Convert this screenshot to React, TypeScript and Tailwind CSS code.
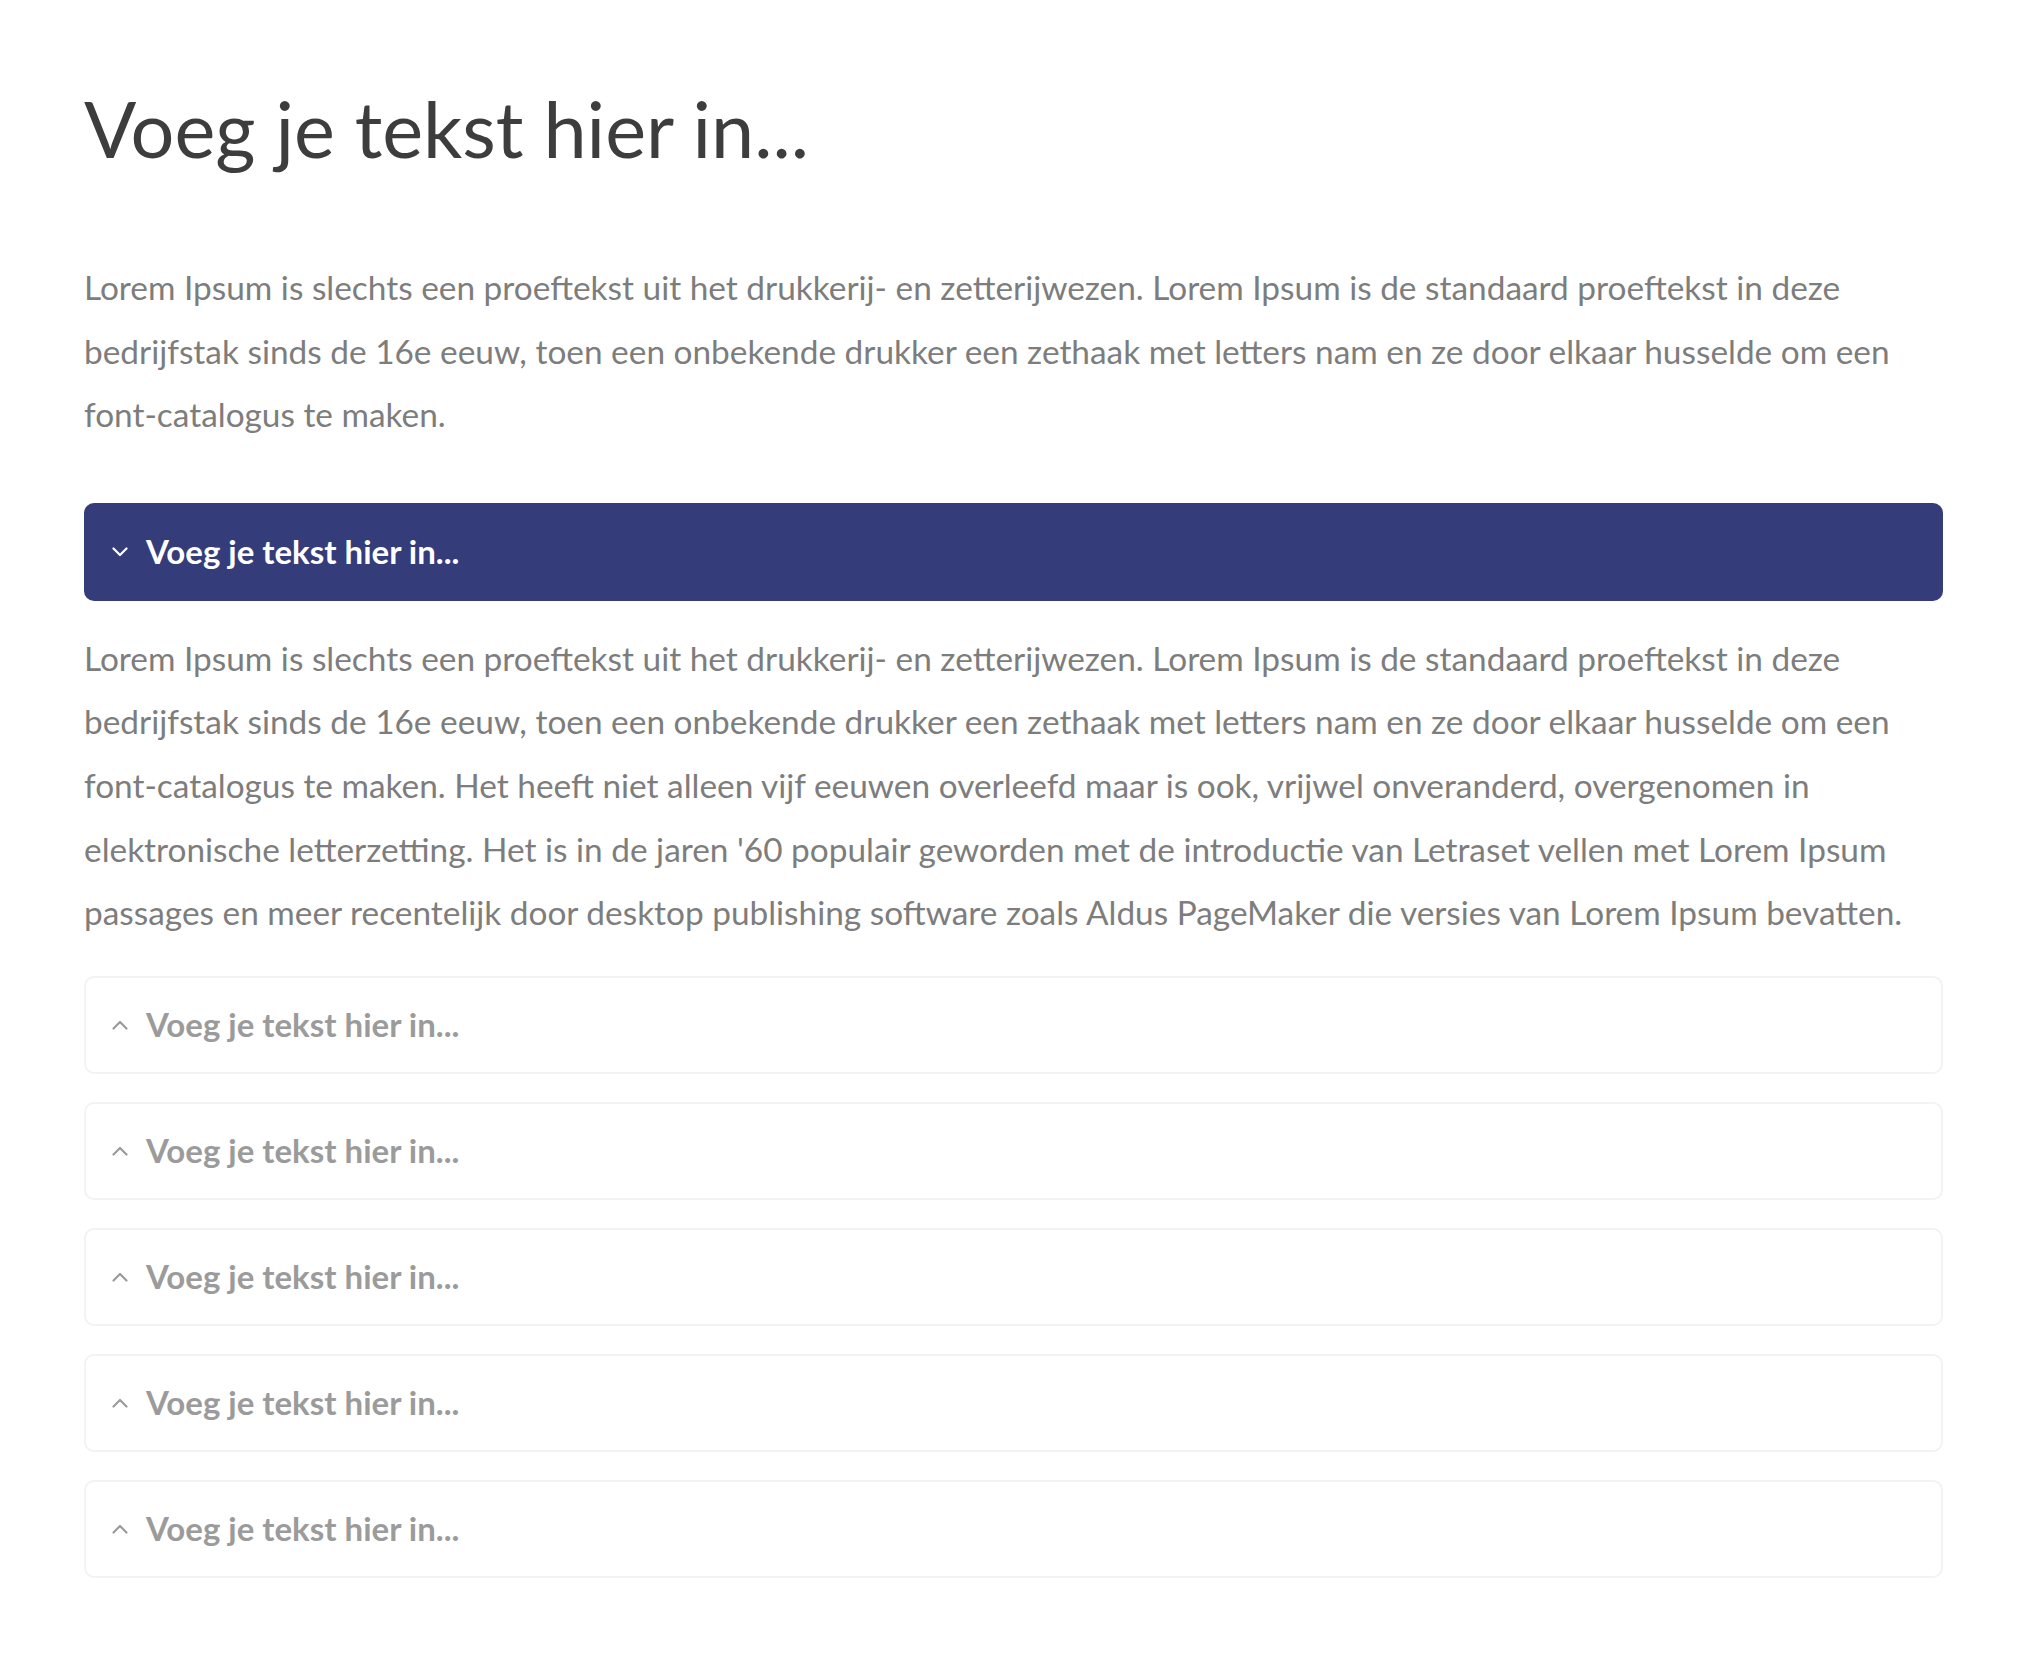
import React from "react";

const para1 =
  "Lorem Ipsum is slechts een proeftekst uit het drukkerij- en zetterijwezen. Lorem Ipsum is de standaard proeftekst in deze bedrijfstak sinds de 16e eeuw, toen een onbekende drukker een zethaak met letters nam en ze door elkaar husselde om een font-catalogus te maken.";

const para2 =
  "Lorem Ipsum is slechts een proeftekst uit het drukkerij- en zetterijwezen. Lorem Ipsum is de standaard proeftekst in deze bedrijfstak sinds de 16e eeuw, toen een onbekende drukker een zethaak met letters nam en ze door elkaar husselde om een font-catalogus te maken. Het heeft niet alleen vijf eeuwen overleefd maar is ook, vrijwel onveranderd, overgenomen in elektronische letterzetting. Het is in de jaren '60 populair geworden met de introductie van Letraset vellen met Lorem Ipsum passages en meer recentelijk door desktop publishing software zoals Aldus PageMaker die versies van Lorem Ipsum bevatten.";

function Chevron({ up, color }: { up?: boolean; color: string }) {
  return (
    <svg width="16" height="10" viewBox="0 0 16 10" className="shrink-0">
      <polyline
        points={up ? "1.5,8.5 8,2 14.5,8.5" : "1.5,1.5 8,8 14.5,1.5"}
        fill="none"
        stroke={color}
        strokeWidth="2.2"
        strokeLinecap="round"
        strokeLinejoin="round"
      />
    </svg>
  );
}

export default function App() {
  return (
    <div className="min-h-screen bg-white pl-[84px] pr-[91px] pt-[80px] pb-[102px] font-['Lato',sans-serif]">
      <h1 className="text-[77.4px] leading-[96px] text-[#3d3d3d] font-normal">
        Voeg je tekst hier in...
      </h1>
      <p className="mt-[80px] text-[33.4px] leading-[63.6px] text-[#7d7d7d]">
        {para1}
      </p>

      <div className="mt-[56px] flex flex-col">
        <div className="h-[98px] rounded-[10px] bg-[#343d7a] flex items-center pl-[28px] gap-[18px]">
          <Chevron color="#ffffff" />
          <span className="text-[33px] font-bold text-white">
            Voeg je tekst hier in...
          </span>
        </div>
        <p className="mt-[26px] text-[33.4px] leading-[63.6px] text-[#7d7d7d]">
          {para2}
        </p>

        <div className="mt-[31px] flex flex-col gap-[28px]">
          {[0, 1, 2, 3, 4].map((i) => (
            <div
              key={i}
              className="h-[98px] rounded-[10px] border-2 border-[#f3f3f3] bg-white flex items-center pl-[26px] gap-[18px]"
            >
              <Chevron up color="#9b9b9b" />
              <span className="text-[33px] font-bold text-[#9b9b9b]">
                Voeg je tekst hier in...
              </span>
            </div>
          ))}
        </div>
      </div>
    </div>
  );
}
